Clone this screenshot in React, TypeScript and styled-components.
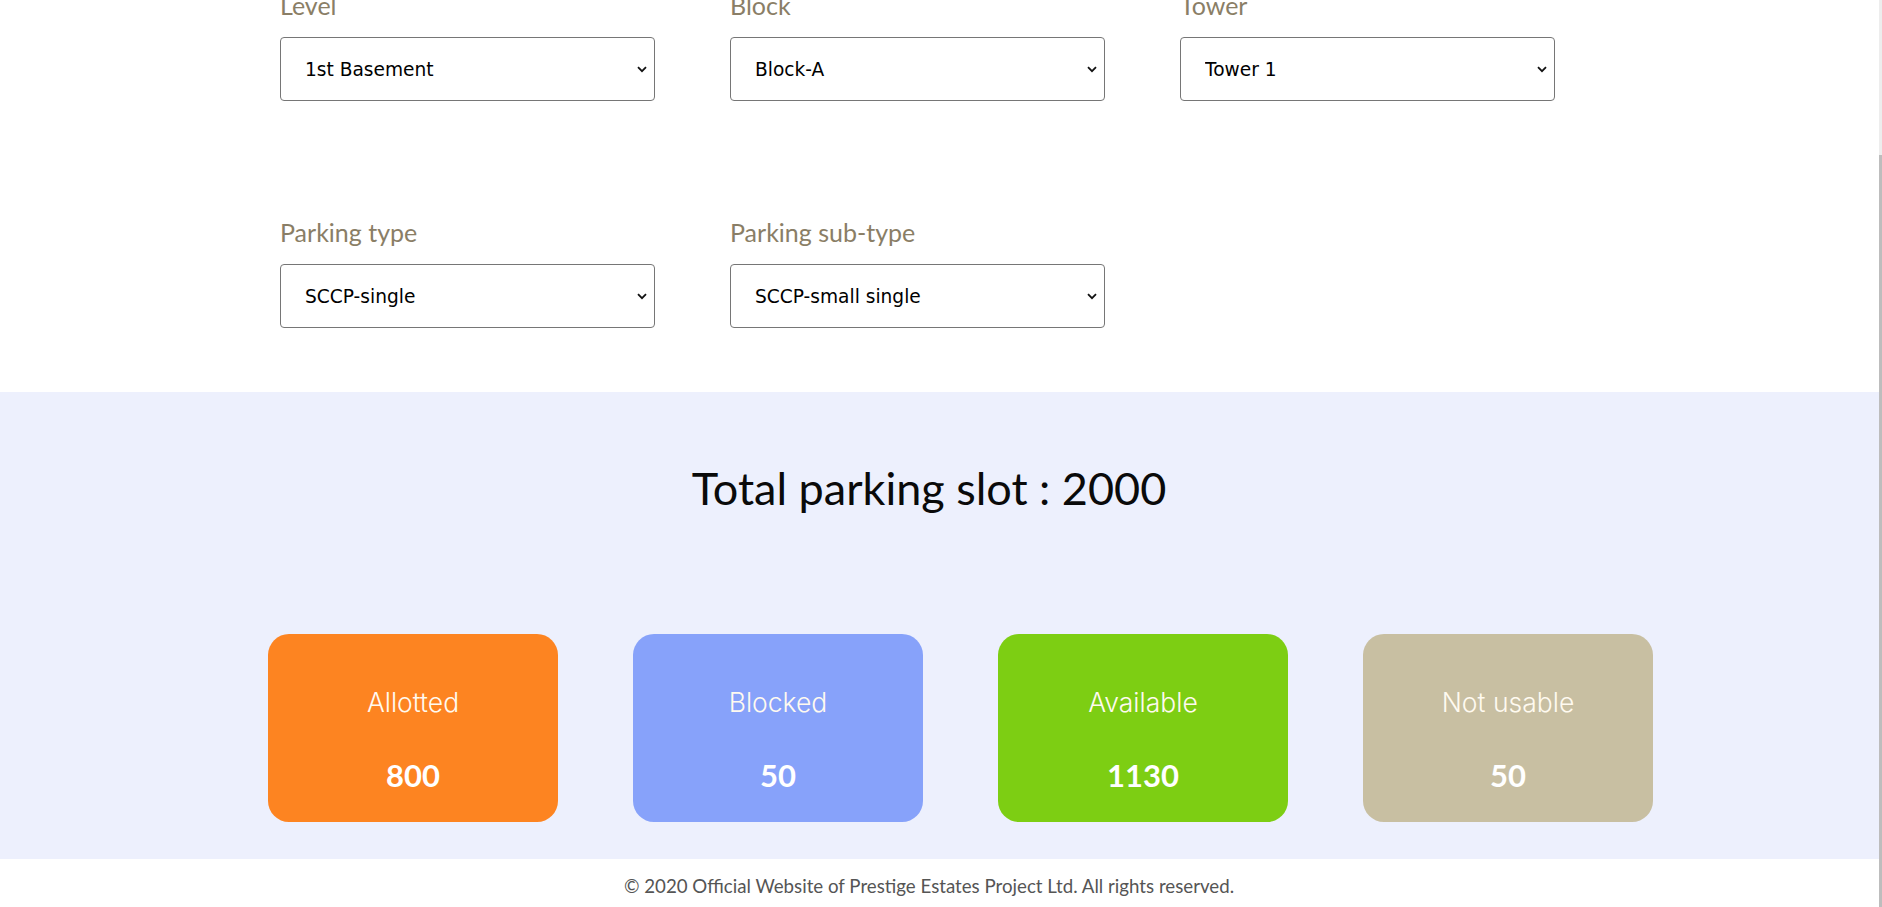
import React from "react";
import styled, { createGlobalStyle } from "styled-components";

const GlobalStyle = createGlobalStyle`
  html, body { margin: 0; padding: 0; background: #ffffff; overflow: hidden; }
  body { font-family: "Lato", "Liberation Sans", sans-serif; }
  * { box-sizing: border-box; }
`;

const Page = styled.div`
  display: flex;
  width: 1882px;
  height: 907px;
  overflow: hidden;
`;

const Main = styled.main`
  width: 1879px;
  flex: none;
  display: flex;
  flex-direction: column;
`;

const ScrollRail = styled.div`
  width: 3px;
  flex: none;
  display: flex;
  flex-direction: column;
  background: #ededed;
`;

const ScrollThumb = styled.div`
  margin-top: 155px;
  flex: 1;
  background: #bdbdbd;
`;

const FilterSection = styled.section`
  background: #ffffff;
  padding: 0 0 64px 280px;
`;

const FilterGrid = styled.div`
  margin-top: -10px;
  display: grid;
  grid-template-columns: repeat(3, 375px);
  column-gap: 75px;
  row-gap: 116px;
`;

const Field = styled.div`
  display: flex;
  flex-direction: column;
  gap: 17px;
`;

const Label = styled.label`
  font-family: "Lato", sans-serif;
  font-size: 25px;
  line-height: 30px;
  color: #8a7e66;
`;

const SelectWrap = styled.div`
  position: relative;
  height: 64px;
`;

const Select = styled.select`
  appearance: none;
  -webkit-appearance: none;
  width: 100%;
  height: 64px;
  border: 1px solid #767676;
  border-radius: 4px;
  background: #ffffff;
  color: #000000;
  font-family: "DejaVu Sans", Verdana, sans-serif;
  font-size: 18.6px;
  padding: 0 40px 0 24px;
  outline: none;
`;

const Chevron = styled.svg`
  position: absolute;
  right: 8px;
  top: 29px;
  width: 10px;
  height: 7px;
  pointer-events: none;
`;

const StatsSection = styled.section`
  background: #edf0fd;
  padding: 69px 0 37px;
  display: flex;
  flex-direction: column;
`;

const Title = styled.h2`
  margin: 0;
  padding-right: 21px;
  text-align: center;
  font-family: "Lato", sans-serif;
  font-weight: 400;
  font-size: 45px;
  line-height: 55px;
  color: #0a0a0a;
`;

const CardRow = styled.div`
  margin-top: 118px;
  padding-left: 268px;
  display: grid;
  grid-template-columns: repeat(4, 290px);
  column-gap: 75px;
`;

const Card = styled.div<{ $bg: string }>`
  height: 188px;
  border-radius: 21px;
  background: ${(p) => p.$bg};
  display: flex;
  flex-direction: column;
  align-items: center;
  padding-top: 53px;
  gap: 39px;
  color: #ffffff;
`;

const CardLabel = styled.div`
  font-family: "Inter", "Open Sans", sans-serif;
  font-weight: 300;
  font-size: 26.5px;
  line-height: 31px;
  color: #fffaf0;
`;

const CardValue = styled.div`
  font-family: "Lato", sans-serif;
  font-weight: 700;
  font-size: 31px;
  line-height: 36px;
`;

const Footer = styled.footer`
  background: #ffffff;
  height: 48px;
  padding: 16px 21px 0 0;
  text-align: center;
  font-family: "Lato", sans-serif;
  font-size: 18.7px;
  line-height: 22px;
  color: #555555;
`;

const fields = [
  { label: "Level", value: "1st Basement" },
  { label: "Block", value: "Block-A" },
  { label: "Tower", value: "Tower 1" },
  { label: "Parking type", value: "SCCP-single" },
  { label: "Parking sub-type", value: "SCCP-small single" },
];

const stats = [
  { label: "Allotted", value: "800", bg: "#fd8421" },
  { label: "Blocked", value: "50", bg: "#87a2fa" },
  { label: "Available", value: "1130", bg: "#7dce13" },
  { label: "Not usable", value: "50", bg: "#c8bfa2" },
];

export default function App() {
  return (
    <>
      <GlobalStyle />
      <Page>
        <Main>
          <FilterSection>
            <FilterGrid>
              {fields.map((f) => (
                <Field key={f.label}>
                  <Label>{f.label}</Label>
                  <SelectWrap>
                    <Select defaultValue={f.value}>
                      <option>{f.value}</option>
                    </Select>
                    <Chevron viewBox="0 0 10 7">
                      <path d="M1 1.2 L5 5.2 L9 1.2" fill="none" stroke="#111" strokeWidth="1.8" />
                    </Chevron>
                  </SelectWrap>
                </Field>
              ))}
            </FilterGrid>
          </FilterSection>
          <StatsSection>
            <Title>Total parking slot : 2000</Title>
            <CardRow>
              {stats.map((s) => (
                <Card key={s.label} $bg={s.bg}>
                  <CardLabel>{s.label}</CardLabel>
                  <CardValue>{s.value}</CardValue>
                </Card>
              ))}
            </CardRow>
          </StatsSection>
          <Footer>© 2020 Official Website of Prestige Estates Project Ltd. All rights reserved.</Footer>
        </Main>
        <ScrollRail>
          <ScrollThumb />
        </ScrollRail>
      </Page>
    </>
  );
}
